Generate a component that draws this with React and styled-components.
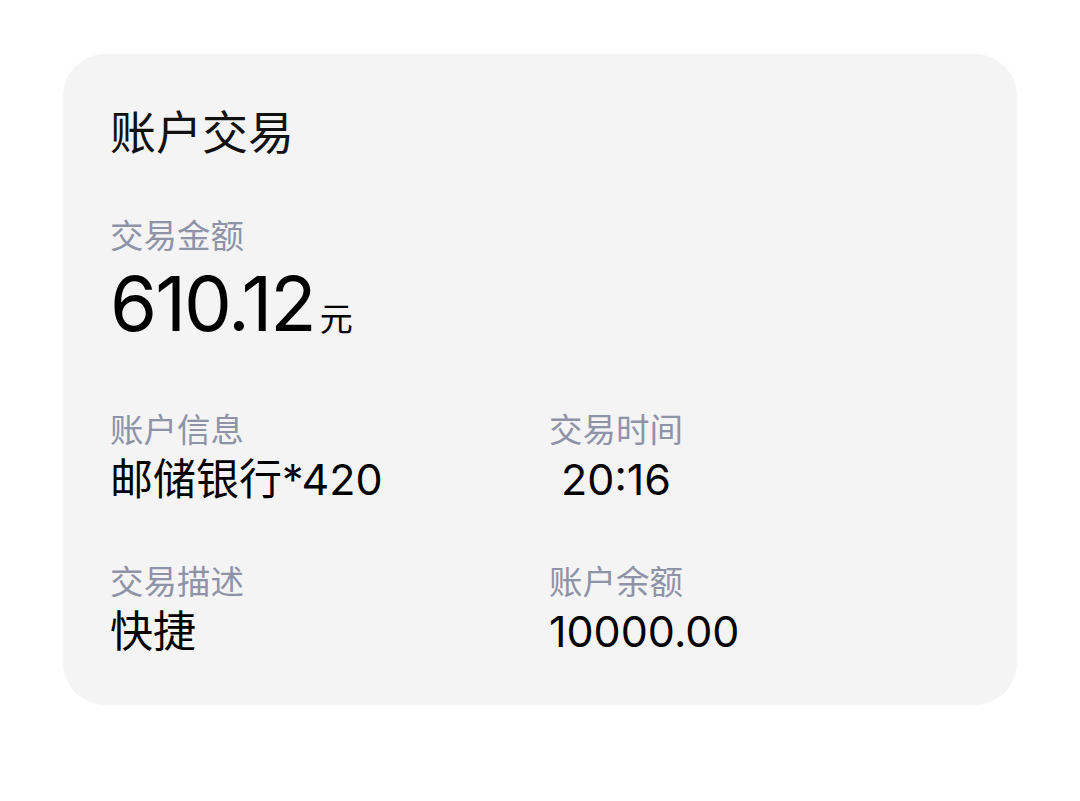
import styled, { createGlobalStyle } from 'styled-components'

const GlobalStyle = createGlobalStyle`
  * { box-sizing: border-box; margin: 0; padding: 0; }
  body {
    background: #ffffff;
    font-family: Inter, "Noto Sans CJK SC", sans-serif;
  }
`

const Page = styled.div`
  padding: 54px 63px 0 63px;
`

const Card = styled.section`
  width: 954px;
  background: #f4f4f4;
  border-radius: 42px;
  padding: 48px 47px 48px 47px;
`

const Title = styled.h1`
  font-size: 46px;
  font-weight: 400;
  line-height: 60px;
  color: #111111;
  margin-bottom: 52px;
`

const Label = styled.div`
  font-size: 33.5px;
  line-height: 44px;
  color: #8e93a8;
`

const Amount = styled.div`
  margin-top: 7px;
  font-size: 76px;
  line-height: 76px;
  height: 76px;
  color: #000000;
  display: flex;
  align-items: baseline;
`

const Digits = styled.span`
  letter-spacing: -2px;
  line-height: 76px;
`

const Unit = styled.span`
  font-size: 33px;
  line-height: 1;
  margin-left: 5px;
`

const Grid = styled.div`
  margin-top: 67px;
  display: grid;
  grid-template-columns: 439px 1fr;
  row-gap: 55px;
`

const Field = styled.div`
  display: flex;
  flex-direction: column;
  gap: 1px;
`

const Value = styled.div`
  font-size: 43px;
  line-height: 52px;
  color: #000000;
  white-space: pre;
`

const fields = [
  { label: '账户信息', value: '邮储银行*420' },
  { label: '交易时间', value: ' 20:16' },
  { label: '交易描述', value: '快捷' },
  { label: '账户余额', value: '10000.00' },
]

export default function App() {
  return (
    <>
      <GlobalStyle />
      <Page>
        <Card>
          <Title>账户交易</Title>
          <Label>交易金额</Label>
          <Amount>
            <Digits>610.12</Digits>
            <Unit>元</Unit>
          </Amount>
          <Grid>
            {fields.map((f) => (
              <Field key={f.label}>
                <Label>{f.label}</Label>
                <Value>{f.value}</Value>
              </Field>
            ))}
          </Grid>
        </Card>
      </Page>
    </>
  )
}
